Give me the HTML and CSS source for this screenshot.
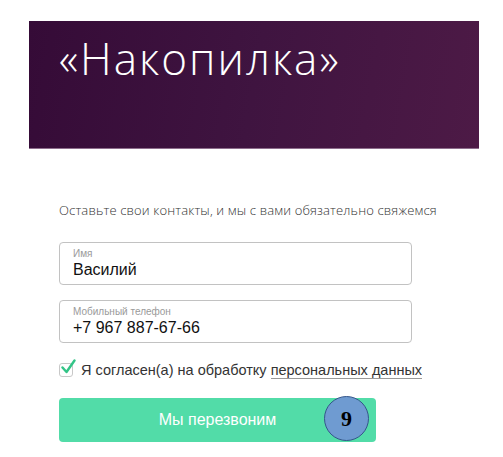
FILE: index.html
```html
<!DOCTYPE html>
<html lang="ru">
<head>
<meta charset="utf-8">
<link rel="stylesheet" href="styles.css">
</head>
<body>
<header class="hero">
  <h1 class="hero-title">«Накопилка»</h1>
</header>
<main class="form">
  <p class="intro">Оставьте свои контакты, и мы с вами обязательно свяжемся</p>
  <div class="field">
    <span class="field-label">Имя</span>
    <span class="field-value">Василий</span>
  </div>
  <div class="field">
    <span class="field-label">Мобильный телефон</span>
    <span class="field-value">+7 967 887-67-66</span>
  </div>
  <label class="agree">
    <span class="check">
      <svg class="check-mark" viewBox="0 0 16 16" width="16" height="16"><path d="M2.5 8.5 L6.5 13 L14.5 1.5" fill="none" stroke="#33c487" stroke-width="2.4" stroke-linecap="round" stroke-linejoin="round"/></svg>
    </span>
    <span class="agree-text">Я согласен(а) на обработку <span class="agree-link">персональных данных</span></span>
  </label>
  <div class="actions">
    <button class="submit">Мы перезвоним</button>
    <span class="badge">9</span>
  </div>
</main>
</body>
</html>
```
FILE: styles.css
```css
html, body {
  margin: 0;
  padding: 0;
  background: #fff;
}
body {
  font-family: "Liberation Sans", Arial, sans-serif;
  color: #222;
}
.hero {
  margin: 21px 0 0 29px;
  width: 450px;
  height: 128px;
  box-sizing: border-box;
  background: linear-gradient(100deg, #350b37 0%, #3f1440 50%, #4d1a46 100%);
  border-bottom: 1px solid #8d6d8c;
  padding: 12px 0 0 30px;
}
.hero-title {
  margin: 0;
  font-family: "Open Sans", sans-serif;
  font-weight: 300;
  font-size: 44px;
  line-height: 50px;
  color: #fff;
  letter-spacing: 2px;
}
.form {
  padding: 52px 0 0 59px;
  width: 353px;
}
.intro {
  margin: 0 0 23px;
  font-family: "Open Sans", sans-serif;
  font-weight: 300;
  font-size: 13px;
  line-height: 18px;
  letter-spacing: 0.15px;
  color: #333;
  white-space: nowrap;
}
.field {
  display: flex;
  flex-direction: column;
  height: 43px;
  box-sizing: border-box;
  border: 1px solid #c2c2c2;
  border-radius: 4px;
  padding: 5px 13px 0;
  margin-bottom: 15px;
}
.field-label {
  font-size: 10px;
  line-height: 12px;
  color: #9a9a9a;
}
.field-value {
  font-size: 16px;
  line-height: 20px;
  color: #111;
}
.agree {
  display: flex;
  align-items: center;
  gap: 8px;
  margin-top: 19px;
  font-size: 14.5px;
  color: #333;
  white-space: nowrap;
}
.check {
  position: relative;
  width: 12px;
  height: 12px;
  border: 1px solid #c8c8c8;
  border-radius: 3px;
  flex: none;
}
.check-mark {
  position: absolute;
  left: 0;
  top: -5px;
}
.agree-link {
  border-bottom: 1px solid #999;
}
.actions {
  position: relative;
  margin-top: 20px;
  width: 317px;
}
.submit {
  display: block;
  width: 317px;
  height: 44px;
  border: none;
  border-radius: 4px;
  background: #52dca8;
  color: #fff;
  font-family: "Liberation Sans", Arial, sans-serif;
  font-size: 16px;
  padding: 0;
}
.badge {
  position: absolute;
  left: 265px;
  top: -2px;
  width: 45px;
  height: 45px;
  box-sizing: border-box;
  border-radius: 50%;
  border: 1px solid #34558a;
  background: #6f9bd1;
  color: #000;
  font-family: "Liberation Serif", serif;
  font-weight: bold;
  font-size: 22px;
  display: flex;
  align-items: center;
  justify-content: center;
}
```
